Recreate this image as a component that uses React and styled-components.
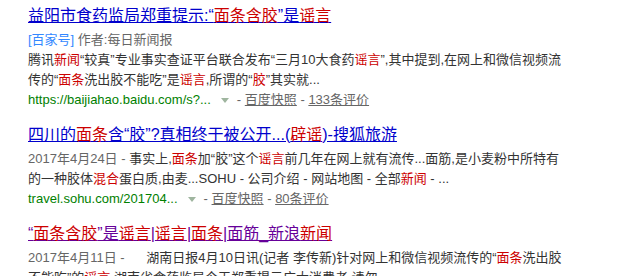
import React from "react";
import styled, { createGlobalStyle } from "styled-components";

const Global = createGlobalStyle`
  html, body { margin: 0; padding: 0; background: #fff; overflow: hidden; }
  body { font-family: "Liberation Sans", Arial, "Noto Sans CJK SC", sans-serif; }
`;

const Page = styled.div`
  width: 635px;
  height: 276px;
  overflow: hidden;
  padding: 4px 0 0 28px;
  box-sizing: border-box;
  display: flex;
  flex-direction: column;
  gap: 13px;
`;

const Result = styled.div`
  display: flex;
  flex-direction: column;
`;

const Title = styled.a`
  font-size: 16px;
  line-height: 24px;
  margin-bottom: 2px;
  white-space: nowrap;
  color: ${(p) => (p.$visited ? "#660099" : "#0000cc")};
  text-decoration: underline;
  cursor: pointer;
`;

const Em = styled.em`
  font-style: normal;
  color: #cc0000;
`;

const Line = styled.div`
  font-size: 13px;
  line-height: 20px;
  color: #333;
  white-space: nowrap;
`;

const Source = styled.span`
  color: #3388ff;
`;

const Gray = styled.span`
  color: #666;
`;

const Url = styled.span`
  color: #008000;
`;

const Snap = styled.a`
  color: #666;
  text-decoration: underline;
`;

const Arrow = styled.svg`
  display: inline-block;
  width: 8px;
  height: 5px;
  margin: 0 8px 1px 10px;
  vertical-align: middle;
`;

const Down = () => (
  <Arrow viewBox="0 0 8 5">
    <path d="M0 0h8L4 5z" fill="#9fb59f" />
  </Arrow>
);

const Meta = ({ url, reviews }) => (
  <Line>
    <Url>{url}</Url>
    <Down />
    <Gray>- </Gray>
    <Snap>百度快照</Snap>
    <Gray> - </Gray>
    <Snap>{reviews}</Snap>
  </Line>
);

export default function App() {
  return (
    <>
      <Global />
      <Page>
        <Result>
          <Title>
            益阳市食药监局郑重提示:“<Em>面条含胶</Em>”是<Em>谣言</Em>
          </Title>
          <Line>
            <Source>[百家号]</Source> <Gray>作者:每日新闻报</Gray>
          </Line>
          <Line>
            腾讯<Em>新闻</Em>“较真”专业事实查证平台联合发布“三月10大食药<Em>谣言</Em>”,其中提到,在网上和微信视频流
          </Line>
          <Line>
            传的“<Em>面条</Em>洗出胶不能吃”是<Em>谣言</Em>,所谓的“<Em>胶</Em>”其实就...
          </Line>
          <Meta url="https://baijiahao.baidu.com/s?..." reviews="133条评价" />
        </Result>
        <Result>
          <Title>
            四川的<Em>面条</Em>含“胶”?真相终于被公开...(<Em>辟谣</Em>)-搜狐旅游
          </Title>
          <Line>
            <Gray>2017年4月24日 - </Gray>事实上,<Em>面条</Em>加“胶”这个<Em>谣言</Em>前几年在网上就有流传...面筋,是小麦粉中所特有
          </Line>
          <Line>
            的一种胶体<Em>混合</Em>蛋白质,由麦...SOHU - 公司介绍 - 网站地图 - 全部<Em>新闻</Em> - ...
          </Line>
          <Meta url="travel.sohu.com/201704..." reviews="80条评价" />
        </Result>
        <Result>
          <Title $visited>
            “<Em>面条含胶</Em>”是<Em>谣言</Em>|<Em>谣言</Em>|<Em>面条</Em>|面筋_新浪<Em>新闻</Em>
          </Title>
          <Line>
            <Gray>2017年4月11日 - </Gray>&nbsp;&nbsp;&nbsp;&nbsp;&nbsp;湖南日报4月10日讯(记者 李传新)针对网上和微信视频流传的“<Em>面条</Em>洗出胶
          </Line>
          <Line>
            不能吃”的<Em>谣言</Em>,湖南省食药监局今天郑重提示广大消费者,请勿...
          </Line>
        </Result>
      </Page>
    </>
  );
}
